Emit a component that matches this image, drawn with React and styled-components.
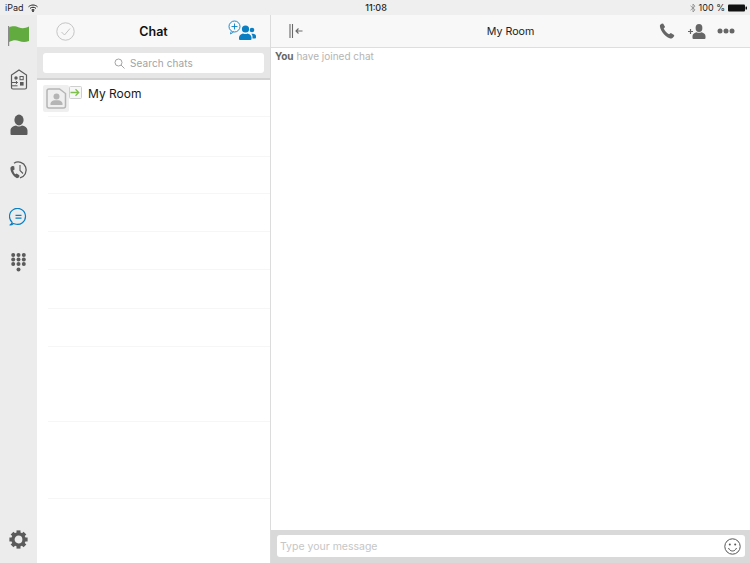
import React from "react";
import styled, { createGlobalStyle } from "styled-components";

const Global = createGlobalStyle`
  html, body { margin: 0; padding: 0; background: #fff; }
  body { font-family: "Inter", "Liberation Sans", sans-serif; overflow: hidden; }
`;
const Page = styled.div`
  width: 750px; height: 563px; display: flex; flex-direction: column; overflow: hidden;
`;
const StatusBar = styled.div`
  height: 15px; flex: none; background: #efefef; display: grid; grid-template-columns: 1fr auto 1fr;
  align-items: center; padding: 0 3px 0 5px; font-size: 9px; color: #222; line-height: 15px;
`;
const StatusLeft = styled.div`display: flex; align-items: center; gap: 4px;`;
const StatusRight = styled.div`display: flex; align-items: center; justify-content: flex-end; gap: 3px;`;
const Clock = styled.div`font-weight: 500; font-size: 9px;`;
const Main = styled.div`flex: 1; display: flex; min-height: 0;`;
const Rail = styled.nav`
  width: 37px; flex: none; background: #ececec; display: flex; flex-direction: column; align-items: center;
  padding: 9px 0 0; box-sizing: border-box;
`;
const RailSlot = styled.div`
  height: ${p => p.$h}px; flex: none; display: flex; align-items: center; justify-content: center; width: 100%;
  margin-bottom: ${p => p.$after || 0}px;
`;
const RailSpacer = styled.div`flex: 1;`;
const ListPane = styled.section`
  width: 233px; flex: none; display: flex; flex-direction: column; border-right: 1px solid #dcdcdc; background: #fff;
`;
const ListHeader = styled.header`
  height: 32px; flex: none; background: #f8f8f8; display: grid; grid-template-columns: 58px 1fr 58px; align-items: center;
`;
const HeaderLeft = styled.div`display: flex; justify-content: flex-start; padding-left: 19px;`;
const HeaderRight = styled.div`display: flex; justify-content: flex-end; padding-right: 14px; transform: translateY(-1px);`;
const Title = styled.h1`
  margin: 0; font-size: 12.5px; font-weight: 600; text-align: center; color: #111; font-family: "Inter", sans-serif;
`;
const SearchWrap = styled.div`
  height: 33px; flex: none; box-sizing: border-box; background: #e6e6e6; border-bottom: 2px solid #d2d2d2;
  padding: 6px 6px 5px 6px;
`;
const SearchBox = styled.div`
  height: 20px; background: #fff; border-radius: 3px; display: flex; align-items: center; justify-content: center; gap: 5px;
  font-size: 10px; color: #a3a3a3; letter-spacing: 0.1px;
`;
const RoomList = styled.div`flex: 1; display: flex; flex-direction: column; min-height: 0;`;
const RoomRow = styled.div`
  height: ${p => p.$h}px; flex: none; box-sizing: border-box; margin-left: ${p => p.$first ? 0 : 11}px; position: relative;
  border-bottom: 1px solid ${p => p.$plain ? "transparent" : "#f6f6f6"};
  ${p => p.$first ? "display: flex; align-items: flex-start; padding: 5px 0 0 6px;" : ""}
`;
const FirstLine = styled.div`
  position: absolute; left: 11px; right: 0; bottom: 0; height: 1px; background: #f6f6f6;
`;
const Avatar = styled.div`
  width: 26px; height: 27px; background: #efefef; border-radius: 2px; display: flex; align-items: center; justify-content: center; flex: none;
`;
const Badge = styled.div`
  width: 13px; height: 13px; flex: none; margin-top: 1px; display: flex;
`;
const RoomName = styled.div`
  font-size: 12px; color: #1a1a1a; margin-left: 6px; line-height: 16px; margin-top: 1px;
`;
const ChatPane = styled.section`flex: 1; display: flex; flex-direction: column; min-width: 0; background: #fff;`;
const ChatHeader = styled.header`
  height: 33px; flex: none; box-sizing: border-box; background: #f8f8f8; border-bottom: 1px solid #dedede;
  display: grid; grid-template-columns: 120px 1fr 120px; align-items: center;
`;
const ChatTitle = styled.div`font-size: 10.7px; color: #222; text-align: center;`;
const CollapseWrap = styled.div`display: flex; padding-left: 18px;`;
const Actions = styled.div`display: flex; align-items: center; justify-content: flex-end; gap: 11px; padding-right: 15px;`;
const PhoneSlot = styled.div`display: flex; margin-right: 2px;`;
const Messages = styled.div`flex: 1; padding: 2px 4px; font-size: 10px; line-height: 13px; color: #b4b4b4;`;
const You = styled.b`font-weight: 700; color: #666;`;
const Composer = styled.div`
  height: 33px; flex: none; box-sizing: border-box; background: #d9d9d9; padding: 5px 5px 6px 6px;
`;
const Input = styled.div`
  height: 22px; background: #fff; border-radius: 3px; display: flex; align-items: center; justify-content: space-between;
  padding: 0 4px 0 3px; font-size: 10.5px; color: #c6c6c6;
`;

const dark = "#5b5b5b";
const blue = "#0a7fc2";

const Flag = () => (
  <svg width="24" height="22" viewBox="0 0 24 22">
    <rect x="1" y="2" width="1.2" height="20" fill="#8a8a8a"/>
    <path d="M2 3.5C6 1.5 9 2.5 12 3.5S18 4.5 22 2.5V17C18 18.5 15 18 12 17S6 16 2 18Z" fill="#62ab3f"/>
  </svg>
);
const Transfer = () => (
  <svg width="18" height="21" viewBox="0 0 18 21" fill="none">
    <path d="M1.500 18.500V6L9 1l7.500 5v12.500a1.500 1.500 0 0 1-1.500 1.500H3a1.500 1.500 0 0 1-1.500-1.500Z" stroke={dark} strokeWidth="1.200"/>
    <circle cx="6" cy="9" r="1.700" fill={dark}/>
    <rect x="10" y="7.500" width="3.200" height="3.200" fill="none" stroke={dark} strokeWidth="1"/>
    <rect x="10" y="13" width="3.600" height="3.600" fill={dark}/>
    <path d="M1.500 13.500H7.500M5.800 12l1.700 1.500-1.700 1.500M2 16.800H7.500" stroke={dark} strokeWidth="1"/>
  </svg>
);
const Person = () => (
  <svg width="18" height="21" viewBox="0 0 18 21">
    <ellipse cx="9" cy="6" rx="4.600" ry="5.400" fill={dark}/>
    <path d="M0.500 20v-3.500c0-3 3-4.500 5.500-5 1.800 1.200 4.200 1.200 6 0 2.500.5 5.500 2 5.500 5V20a1 1 0 0 1-1 1H1.500a1 1 0 0 1-1-1Z" fill={dark}/>
  </svg>
);
const History = () => (
  <svg width="20" height="20" viewBox="0 0 20 20" fill="none">
    <path d="M5 3.200A8 8 0 1 1 11 17.800" stroke={dark} strokeWidth="1.300"/>
    <path d="M11 5v5.500l3 3" stroke={dark} strokeWidth="1.100"/>
    <path d="M3 6 1.500 7.500c-.6 3.200 2.300 8.700 6.500 10.800l2.200-1.100.2-2-2.800-1.800-1.400.9c-.9-.9-1.800-2.700-2-4l1.400-.9L5.200 6.200Z" fill={dark}/>
  </svg>
);
const Bubble = () => (
  <svg width="19" height="18" viewBox="0 0 19 18" fill="none">
    <path d="M1 17c1.200-.6 1.900-1.500 2.200-2.600A8 8 0 1 1 6 16a8 8 0 0 1-1.600-.5C3.400 16.400 2.200 16.900 1 17Z" stroke={blue} strokeWidth="1.200" strokeLinejoin="round"/>
    <path d="M6.500 7.300H12.500M6.500 10.200H12.500" stroke={blue} strokeWidth="1.200"/>
  </svg>
);
const Keypad = () => (
  <svg width="15" height="19" viewBox="0 0 15 19" fill={dark}>
    {[2.2, 7.5, 12.8].flatMap(x => [2, 6.5, 11].map(y => <circle key={x + "-" + y} cx={x} cy={y} r="2"/>))}
    <circle cx="7.500" cy="16.500" r="2"/>
  </svg>
);
const Gear = () => (
  <svg width="19" height="19" viewBox="0 0 24 24" fill="none">
    <circle cx="12" cy="12" r="7" stroke={dark} strokeWidth="4.200"/>
    {[0, 45, 90, 135, 180, 225, 270, 315].map(a => (
      <rect key={a} x="9.500" y="0.500" width="5" height="5" fill={dark} transform={`rotate(${a} 12 12)`}/>
    ))}
  </svg>
);
const Check = () => (
  <svg width="19" height="19" viewBox="0 0 19 19" fill="none">
    <circle cx="9.500" cy="9.500" r="8.700" stroke="#c4c4c4" strokeWidth="1"/>
    <path d="M5.500 10l3 3 5.500-6.500" stroke="#c4c4c4" strokeWidth="1"/>
  </svg>
);
const NewGroup = () => (
  <svg width="28" height="20" viewBox="0 0 28 20" fill="none">
    <circle cx="6.500" cy="6.500" r="5.500" stroke={blue} strokeWidth="0.900"/>
    <path d="M6.500 3.500v6M3.500 6.500h6" stroke={blue} strokeWidth="0.900"/>
    <path d="M3 11.500 2.500 14l3-2" stroke={blue} strokeWidth="0.800"/>
    <circle cx="17.500" cy="9" r="3.600" fill={blue}/>
    <path d="M11 19v-1.500c0-2.500 2.500-3.500 4-4 1.300.7 3.500.7 4.500 0 1.500.5 4 1.500 4 4V19a1 1 0 0 1-1 1H12a1 1 0 0 1-1-1Z" fill={blue}/>
    <circle cx="24" cy="10" r="2.300" fill={blue}/>
    <path d="M24.500 18.500v-2c0-1-.4-2-1.200-2.800h1.700c1.500 0 3 1 3 2.600v1.300a.9.9 0 0 1-.9.9Z" fill={blue}/>
  </svg>
);
const Search = () => (
  <svg width="11" height="11" viewBox="0 0 11 11" fill="none">
    <circle cx="4.500" cy="4.500" r="3.500" stroke="#9a9a9a" strokeWidth="0.900"/>
    <path d="M7 7l3.500 3.500" stroke="#9a9a9a" strokeWidth="0.900"/>
  </svg>
);
const RoomAvatar = () => (
  <svg width="21" height="21" viewBox="0 0 21 21" fill="none">
    <path d="M3 1H13.500L19.500 5.500V18a2 2 0 0 1-2 2H3a2 2 0 0 1-2-2V3a2 2 0 0 1 2-2Z" stroke="#b5b5b5" strokeWidth="1.500"/>
    <circle cx="10.500" cy="8.500" r="3" fill="#b5b5b5"/>
    <path d="M4.500 17v-1.500c0-2 2.500-3 4-3.200h4c1.500.2 4 1.200 4 3.200V17Z" fill="#b5b5b5"/>
  </svg>
);
const Join = () => (
  <svg width="13" height="13" viewBox="0 0 13 13" fill="none">
    <rect x="0.500" y="0.500" width="12" height="12" rx="1" fill="#f7f7f7" stroke="#cfcfcf"/>
    <path d="M1.500 6.500H9.500M6.500 3.300l3.200 3.200-3.200 3.200" stroke="#7fbf4d" strokeWidth="1.300"/>
  </svg>
);
const Collapse = () => (
  <svg width="14" height="14" viewBox="0 0 14 14" fill="none">
    <path d="M1 0V14M3.500 0V14" stroke="#6a6a6a" strokeWidth="1.100"/>
    <path d="M13.500 7H7M9.500 4.500 7 7 9.500 9.500" stroke="#6a6a6a" strokeWidth="1.100"/>
  </svg>
);
const Phone = () => (
  <svg width="16" height="16" viewBox="0 0 15 15">
    <path d="M2.800.4.900 1.900C.2 5 4.500 12.500 10.500 14.600c1.300.2 2.800-.8 3.800-2.400l-.2-.9-3-2-1.700 1.200C7.500 9.800 5 7 4.400 5.200l1.300-1.400L4 .6Z" fill="#666"/>
  </svg>
);
const AddPerson = () => (
  <svg width="18" height="15" viewBox="0 0 18 15">
    <path d="M0 7.500H5M2.500 5v5" stroke="#666" strokeWidth="1.200"/>
    <ellipse cx="11" cy="4" rx="3.400" ry="3.900" fill="#666"/>
    <path d="M4.500 14v-2c0-2 2.500-3.300 4-3.700 1.500.7 3.500.7 5 0 1.500.4 4 1.700 4 3.700v2a1 1 0 0 1-1 1h-11a1 1 0 0 1-1-1Z" fill="#666"/>
  </svg>
);
const More = () => (
  <svg width="18" height="6" viewBox="0 0 18 6" fill="#666">
    <circle cx="3" cy="3" r="2.500"/><circle cx="9" cy="3" r="2.500"/><circle cx="15" cy="3" r="2.500"/>
  </svg>
);
const Smile = () => (
  <svg width="17" height="17" viewBox="0 0 17 17" fill="none">
    <circle cx="8.500" cy="8.500" r="7.700" stroke="#555" strokeWidth="1"/>
    <circle cx="5.800" cy="6.500" r="1" fill="#555"/><circle cx="11.200" cy="6.500" r="1" fill="#555"/>
    <path d="M4.500 10c.8 2 2.300 3 4 3s3.200-1 4-3" stroke="#555" strokeWidth="1"/>
  </svg>
);
const Wifi = () => (
  <svg width="10" height="8" viewBox="0 0 10 8" fill="none" stroke="#222">
    <path d="M.5 2.800C3 .4 7 .4 9.500 2.800M2 4.400C3.700 2.900 6.300 2.900 8 4.400M3.500 6c.9-.7 2.100-.7 3 0"/>
    <circle cx="5" cy="7" r=".6" fill="#222"/>
  </svg>
);
const Bt = () => (
  <svg width="6" height="10" viewBox="0 0 6 10" fill="none" stroke="#8a8a8a" strokeWidth=".8">
    <path d="M.5 2.800 5 6.800 3 9V1L5 3.200.5 7.200"/>
  </svg>
);
const Battery = () => (
  <svg width="19" height="8" viewBox="0 0 19 8">
    <rect x="0" y="0.500" width="17" height="7" rx="1" fill="#111"/>
    <rect x="17.500" y="2.500" width="1.500" height="3" rx=".5" fill="#111"/>
  </svg>
);

const rows = [
  { h: 38.5 }, { h: 37.5 }, { h: 38 }, { h: 38 }, { h: 38.5 }, { h: 38 },
  { h: 38, plain: true }, { h: 37 }, { h: 39, plain: true }, { h: 38 },
];

export default function App() {
  return (
    <Page>
      <Global />
      <StatusBar>
        <StatusLeft>iPad <Wifi /></StatusLeft>
        <Clock>11:08</Clock>
        <StatusRight><Bt /> <span>100 %</span> <Battery /></StatusRight>
      </StatusBar>
      <Main>
        <Rail>
          <RailSlot $h={22} $after={10}><Flag /></RailSlot>
          <RailSlot $h={46}><Transfer /></RailSlot>
          <RailSlot $h={44}><Person /></RailSlot>
          <RailSlot $h={48}><History /></RailSlot>
          <RailSlot $h={46}><Bubble /></RailSlot>
          <RailSlot $h={44}><Keypad /></RailSlot>
          <RailSpacer />
          <RailSlot $h={46} $after={1}><Gear /></RailSlot>
        </Rail>
        <ListPane>
          <ListHeader>
            <HeaderLeft><Check /></HeaderLeft>
            <Title>Chat</Title>
            <HeaderRight><NewGroup /></HeaderRight>
          </ListHeader>
          <SearchWrap>
            <SearchBox><Search />Search chats</SearchBox>
          </SearchWrap>
          <RoomList>
            <RoomRow $first $plain $h={38}>
              <Avatar><RoomAvatar /></Avatar>
              <Badge><Join /></Badge>
              <RoomName>My Room</RoomName>
              <FirstLine />
            </RoomRow>
            {rows.map((r, i) => <RoomRow key={i} $h={r.h} $plain={r.plain} />)}
          </RoomList>
        </ListPane>
        <ChatPane>
          <ChatHeader>
            <CollapseWrap><Collapse /></CollapseWrap>
            <ChatTitle>My Room</ChatTitle>
            <Actions><PhoneSlot><Phone /></PhoneSlot><AddPerson /><More /></Actions>
          </ChatHeader>
          <Messages><You>You</You> have joined chat</Messages>
          <Composer>
            <Input>Type your message<Smile /></Input>
          </Composer>
        </ChatPane>
      </Main>
    </Page>
  );
}
